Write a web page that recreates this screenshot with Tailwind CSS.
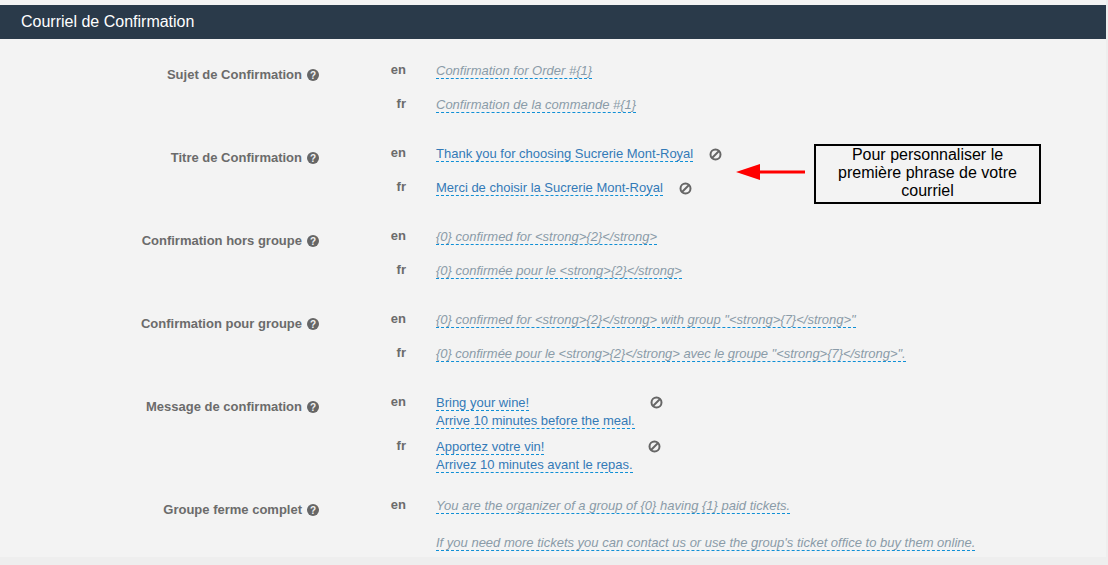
<!DOCTYPE html>
<html lang="fr">
<head>
    <meta charset="UTF-8">
    <title>Courriel de Confirmation</title>
    <script src="https://cdn.jsdelivr.net/npm/@tailwindcss/browser@4"></script>
</head>
<body class="relative h-[565px] w-[1108px] overflow-hidden bg-[#eeeeee] font-['Liberation_Sans',Arial,sans-serif]">
    <div class="h-[557px] w-[1106px] overflow-hidden bg-[#f3f3f3] pt-[5px]">
        <div class="h-[34px] bg-[#2a3a4a] pl-[21px] text-[16px] leading-[33px] text-white">Courriel de Confirmation</div>

        <div class="flex flex-col gap-[15px] pt-[13px]">
            <!-- Sujet -->
            <div class="flex">
                <div class="flex h-[34px] w-[319px] items-start justify-end gap-[5px] pt-[14px] text-[13px] leading-[18px] font-bold text-[#6b6b6b]">Sujet de Confirmation
                    <svg class="mt-[3px] h-3 w-3" viewBox="0 0 12 12"><circle cx="6" cy="6" r="6" fill="#666"/><text x="6" y="9.6" text-anchor="middle" font-size="10" font-weight="bold" fill="#f3f3f3">?</text></svg>
                </div>
                <div class="flex flex-col">
                    <div class="flex h-[34px]">
                        <div class="w-[87px] pt-[9px] text-right text-[13px] leading-[18px] font-bold text-[#6b6b6b]">en</div>
                        <div class="pt-[11px] pl-[30px]"><div class="border-b border-dashed border-[#0f8fd6] text-[13px] leading-[15px] text-[#8a9ba8] italic">Confirmation for Order #{1}</div></div>
                    </div>
                    <div class="flex h-[34px]">
                        <div class="w-[87px] pt-[9px] text-right text-[13px] leading-[18px] font-bold text-[#6b6b6b]">fr</div>
                        <div class="pt-[11px] pl-[30px]"><div class="border-b border-dashed border-[#0f8fd6] text-[13px] leading-[15px] text-[#8a9ba8] italic">Confirmation de la commande #{1}</div></div>
                    </div>
                </div>
            </div>

            <!-- Titre -->
            <div class="flex">
                <div class="flex h-[34px] w-[319px] items-start justify-end gap-[5px] pt-[14px] text-[13px] leading-[18px] font-bold text-[#6b6b6b]">Titre de Confirmation
                    <svg class="mt-[3px] h-3 w-3" viewBox="0 0 12 12"><circle cx="6" cy="6" r="6" fill="#666"/><text x="6" y="9.6" text-anchor="middle" font-size="10" font-weight="bold" fill="#f3f3f3">?</text></svg>
                </div>
                <div class="flex flex-col">
                    <div class="flex h-[34px]">
                        <div class="w-[87px] pt-[9px] text-right text-[13px] leading-[18px] font-bold text-[#6b6b6b]">en</div>
                        <div class="flex items-start gap-[16px] pt-[11px] pl-[30px]"><div class="border-b border-dashed border-[#0f8fd6] text-[13px] leading-[15px] text-[#337ab7]">Thank you for choosing Sucrerie Mont-Royal</div>
                            <svg class="mt-[2px] h-[13px] w-[13px]" viewBox="0 0 13 13" fill="none" stroke="#666" stroke-width="2"><circle cx="6.5" cy="6.5" r="5"/><path d="M3 10 10 3"/></svg>
                        </div>
                    </div>
                    <div class="flex h-[34px]">
                        <div class="w-[87px] pt-[9px] text-right text-[13px] leading-[18px] font-bold text-[#6b6b6b]">fr</div>
                        <div class="flex items-start gap-[16px] pt-[11px] pl-[30px]"><div class="border-b border-dashed border-[#0f8fd6] text-[13px] leading-[15px] text-[#337ab7]">Merci de choisir la Sucrerie Mont-Royal</div>
                            <svg class="mt-[2px] h-[13px] w-[13px]" viewBox="0 0 13 13" fill="none" stroke="#666" stroke-width="2"><circle cx="6.5" cy="6.5" r="5"/><path d="M3 10 10 3"/></svg>
                        </div>
                    </div>
                </div>
            </div>

            <!-- Hors groupe -->
            <div class="flex">
                <div class="flex h-[34px] w-[319px] items-start justify-end gap-[5px] pt-[14px] text-[13px] leading-[18px] font-bold text-[#6b6b6b]">Confirmation hors groupe
                    <svg class="mt-[3px] h-3 w-3" viewBox="0 0 12 12"><circle cx="6" cy="6" r="6" fill="#666"/><text x="6" y="9.6" text-anchor="middle" font-size="10" font-weight="bold" fill="#f3f3f3">?</text></svg>
                </div>
                <div class="flex flex-col">
                    <div class="flex h-[34px]">
                        <div class="w-[87px] pt-[9px] text-right text-[13px] leading-[18px] font-bold text-[#6b6b6b]">en</div>
                        <div class="pt-[11px] pl-[30px]"><div class="border-b border-dashed border-[#0f8fd6] text-[13px] leading-[15px] text-[#8a9ba8] italic">{0} confirmed for &lt;strong&gt;{2}&lt;/strong&gt;</div></div>
                    </div>
                    <div class="flex h-[34px]">
                        <div class="w-[87px] pt-[9px] text-right text-[13px] leading-[18px] font-bold text-[#6b6b6b]">fr</div>
                        <div class="pt-[11px] pl-[30px]"><div class="border-b border-dashed border-[#0f8fd6] text-[13px] leading-[15px] text-[#8a9ba8] italic">{0} confirmée pour le &lt;strong&gt;{2}&lt;/strong&gt;</div></div>
                    </div>
                </div>
            </div>

            <!-- Pour groupe -->
            <div class="flex">
                <div class="flex h-[34px] w-[319px] items-start justify-end gap-[5px] pt-[14px] text-[13px] leading-[18px] font-bold text-[#6b6b6b]">Confirmation pour groupe
                    <svg class="mt-[3px] h-3 w-3" viewBox="0 0 12 12"><circle cx="6" cy="6" r="6" fill="#666"/><text x="6" y="9.6" text-anchor="middle" font-size="10" font-weight="bold" fill="#f3f3f3">?</text></svg>
                </div>
                <div class="flex flex-col">
                    <div class="flex h-[34px]">
                        <div class="w-[87px] pt-[9px] text-right text-[13px] leading-[18px] font-bold text-[#6b6b6b]">en</div>
                        <div class="pt-[11px] pl-[30px]"><div class="border-b border-dashed border-[#0f8fd6] text-[13px] leading-[15px] text-[#8a9ba8] italic">{0} confirmed for &lt;strong&gt;{2}&lt;/strong&gt; with group "&lt;strong&gt;{7}&lt;/strong&gt;"</div></div>
                    </div>
                    <div class="flex h-[34px]">
                        <div class="w-[87px] pt-[9px] text-right text-[13px] leading-[18px] font-bold text-[#6b6b6b]">fr</div>
                        <div class="pt-[11px] pl-[30px]"><div class="w-[470px] border-b border-dashed border-[#0f8fd6] text-[13px] leading-[15px] tracking-[-0.045px] whitespace-nowrap text-[#8a9ba8] italic">{0} confirmée pour le &lt;strong&gt;{2}&lt;/strong&gt; avec le groupe "&lt;strong&gt;{7}&lt;/strong&gt;".</div></div>
                    </div>
                </div>
            </div>

            <!-- Message -->
            <div class="flex">
                <div class="flex h-[34px] w-[319px] items-start justify-end gap-[5px] pt-[14px] text-[13px] leading-[18px] font-bold text-[#6b6b6b]">Message de confirmation
                    <svg class="mt-[3px] h-3 w-3" viewBox="0 0 12 12"><circle cx="6" cy="6" r="6" fill="#666"/><text x="6" y="9.6" text-anchor="middle" font-size="10" font-weight="bold" fill="#f3f3f3">?</text></svg>
                </div>
                <div class="flex flex-col">
                    <div class="flex h-[44px]">
                        <div class="w-[87px] pt-[9px] text-right text-[13px] leading-[18px] font-bold text-[#6b6b6b]">en</div>
                        <div class="flex items-start pt-[11px] pl-[30px]">
                            <div class="flex w-[214px] flex-col items-start gap-[2px] text-[13px] leading-[15px] text-[#337ab7]"><div class="border-b border-dashed border-[#0f8fd6]">Bring your wine!</div><div class="border-b border-dashed border-[#0f8fd6]">Arrive 10 minutes before the meal.</div></div>
                            <svg class="mt-[1px] h-[13px] w-[13px]" viewBox="0 0 13 13" fill="none" stroke="#666" stroke-width="2"><circle cx="6.5" cy="6.5" r="5"/><path d="M3 10 10 3"/></svg>
                        </div>
                    </div>
                    <div class="flex h-[44px]">
                        <div class="w-[87px] pt-[9px] text-right text-[13px] leading-[18px] font-bold text-[#6b6b6b]">fr</div>
                        <div class="flex items-start pt-[11px] pl-[30px]">
                            <div class="flex w-[212px] flex-col items-start gap-[2px] text-[13px] leading-[15px] text-[#337ab7]"><div class="border-b border-dashed border-[#0f8fd6]">Apportez votre vin!</div><div class="border-b border-dashed border-[#0f8fd6]">Arrivez 10 minutes avant le repas.</div></div>
                            <svg class="mt-[1px] h-[13px] w-[13px]" viewBox="0 0 13 13" fill="none" stroke="#666" stroke-width="2"><circle cx="6.5" cy="6.5" r="5"/><path d="M3 10 10 3"/></svg>
                        </div>
                    </div>
                </div>
            </div>

            <!-- Groupe ferme -->
            <div class="flex">
                <div class="flex h-[34px] w-[319px] items-start justify-end gap-[5px] pt-[14px] text-[13px] leading-[18px] font-bold text-[#6b6b6b]">Groupe ferme complet
                    <svg class="mt-[3px] h-3 w-3" viewBox="0 0 12 12"><circle cx="6" cy="6" r="6" fill="#666"/><text x="6" y="9.6" text-anchor="middle" font-size="10" font-weight="bold" fill="#f3f3f3">?</text></svg>
                </div>
                <div class="flex">
                    <div class="w-[87px] pt-[9px] text-right text-[13px] leading-[18px] font-bold text-[#6b6b6b]">en</div>
                    <div class="flex flex-col items-start gap-[21px] pt-[11px] pl-[30px] text-[13px] leading-[15px] text-[#8a9ba8] italic">
                        <div class="border-b border-dashed border-[#0f8fd6]">You are the organizer of a group of {0} having {1} paid tickets.</div>
                        <div class="border-b border-dashed border-[#0f8fd6]">If you need more tickets you can contact us or use the group's ticket office to buy them online.</div>
                    </div>
                </div>
            </div>
        </div>
    </div>

    <!-- annotation over the form -->
    <svg class="absolute top-[160px] left-[736px] h-[24px] w-[70px]" viewBox="0 0 70 24"><path d="M0 12 24 4V10.5H69V13.5H24V20Z" fill="#ff0000"/></svg>
    <div class="absolute top-[144px] left-[814px] flex h-[60px] w-[227px] items-start justify-center border-2 border-black bg-[#f3f3f3] text-center text-[16px] leading-[18px] text-black">
        <div class="w-[210px]">Pour personnaliser le première phrase de votre courriel</div>
    </div>
</body>
</html>
